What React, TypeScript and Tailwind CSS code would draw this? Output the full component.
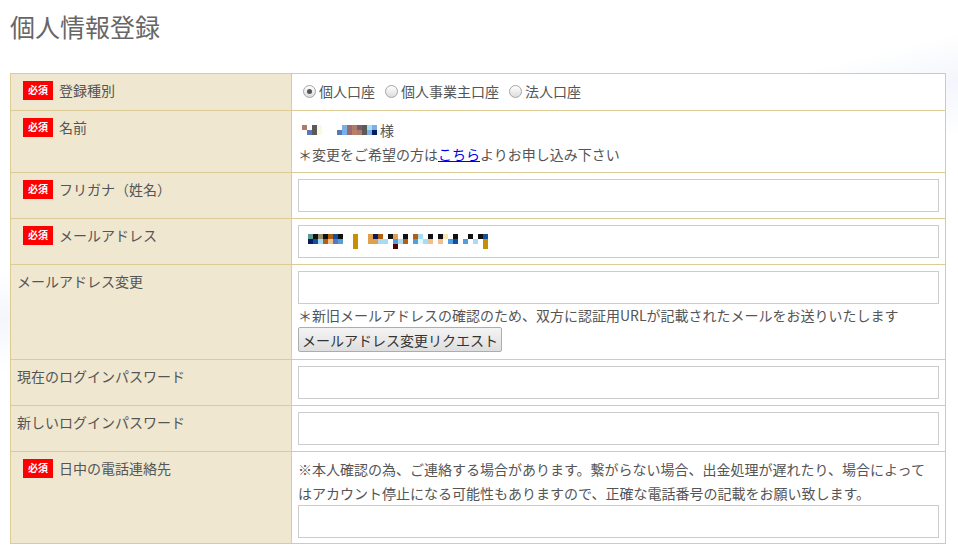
import React from 'react';

const font = { fontFamily: '"Noto Sans CJK JP", "Noto Sans", sans-serif' };

const palette: Record<string, string> = {
    a: '#b07a68', b: '#5a78b8', c: '#5a5a5a', d: '#fdf8e0', e: '#7ab0e8',
    f: '#9a6a70', g: '#b8806a', h: '#7a5a70', i: '#e0fbff', j: '#5a9a90',
    k: '#0a1a5a', l: '#111111', m: '#9a9070', n: '#b06010', o: '#1050a0',
    p: '#c89000', q: '#e0a050', r: '#a8dcf4', s: '#500000', t: '#f0c090',
    u: '#50a0e0', v: '#f8e8b0',
};

// censored text in the picture, drawn as 5px blocks
const Mosaic = ({ rows }: { rows: string[] }) => (
    <span className="inline-flex flex-col align-middle">
        {rows.map((row, ri) => (
            <span key={ri} className="flex">
                {row.split('').map((ch, ci) => (
                    <span
                        key={ci}
                        className="block h-[5px] w-[5px]"
                        style={{ background: ch === '.' ? 'transparent' : palette[ch] }}
                    />
                ))}
            </span>
        ))}
    </span>
);

const Required = () => (
    <span className="ml-[6px] mr-[6px] inline-flex h-[19px] w-[30px] items-center justify-center bg-[#ff0000] text-[10px] font-bold leading-none text-white">
        必須
    </span>
);

const Label = ({ children, required }: { children: React.ReactNode; required?: boolean }) => (
    <td className="w-[281px] border border-[#dccb94] bg-[#efe7d0] pb-[6px] pl-[6px] pt-[4px] align-top text-[14px] leading-[24px] text-[#555]">
        <div className="flex items-center">
            {required && <Required />}
            <span>{children}</span>
        </div>
    </td>
);

const TextInput = ({ children }: { children?: React.ReactNode }) => (
    <div className="flex h-[33px] w-full items-center border border-[#cccccc] bg-white px-[9px]">{children}</div>
);

const Radio = ({ checked, label }: { checked?: boolean; label: string }) => (
    <label className="mr-[10px] inline-flex items-center">
        <span className="mr-[3px] flex h-[13px] w-[13px] items-center justify-center rounded-full border border-[#a6a6a6] bg-[linear-gradient(#ffffff,#dcdcdc)]">
            {checked && <span className="h-[5px] w-[5px] rounded-full bg-[#555]" />}
        </span>
        {label}
    </label>
);

export default function App() {
    return (
        <div
            className="relative min-h-[559px] w-[958px] overflow-hidden bg-white bg-[linear-gradient(166deg,#ffffff_0%,#ffffff_34%,#f3f6fc_40%,#ffffff_47%,#ffffff_100%)] text-[#555]"
            style={font}
        >
            <h1 className="px-[10px] pt-[9px] text-[25px] font-normal leading-[34px] text-[#666]">個人情報登録</h1>

            <table className="ml-[10px] mt-[30px] w-[936px] border-collapse border border-[#dccb94] bg-white">
                <tbody>
                    <tr>
                        <Label required>登録種別</Label>
                        <td className="border border-[#dccb94] px-[11px] pb-[7px] pt-[5px] align-top text-[14px] leading-[24px]">
                            <div className="flex items-center">
                                <Radio checked label="個人口座" />
                                <Radio label="個人事業主口座" />
                                <Radio label="法人口座" />
                            </div>
                        </td>
                    </tr>
                    <tr>
                        <Label required>名前</Label>
                        <td className="border border-[#dccb94] pb-[6px] pl-[6px] pr-[6px] pt-[7px] align-top text-[14px] leading-[24px]">
                            <div className="flex items-center pl-[4px]">
                                <Mosaic rows={['a.cd', '.bcd']} />
                                <span className="w-[15px]" />
                                <Mosaic rows={['.efahcre.', 'befgaceki']} />
                                <span className="-ml-[2px]">様</span>
                            </div>
                            <div>
                                ＊変更をご希望の方は<a className="text-[#0000ee] underline">こちら</a>よりお申し込み下さい
                            </div>
                        </td>
                    </tr>
                    <tr>
                        <Label required>フリガナ（姓名）</Label>
                        <td className="border border-[#dccb94] p-[6px] align-top">
                            <TextInput />
                        </td>
                    </tr>
                    <tr>
                        <Label required>メールアドレス</Label>
                        <td className="border border-[#dccb94] p-[6px] align-top">
                            <TextInput>
                                <Mosaic
                                    rows={[
                                        'jlmlnol..p..qkn.lq.l.nr.l.lv.l..l.lo',
                                        'korntbu..p..qqrr.urn.uirt.t.uo.u.r.p',
                                        '.........p.......s.................p',
                                    ]}
                                />
                            </TextInput>
                        </td>
                    </tr>
                    <tr>
                        <Label>メールアドレス変更</Label>
                        <td className="border border-[#dccb94] px-[6px] pb-[7px] pt-[6px] align-top text-[14px]">
                            <TextInput />
                            <div className="leading-[22px]">
                                ＊新旧メールアドレスの確認のため、双方に認証用URLが記載されたメールをお送りいたします
                            </div>
                            <button className="mt-px h-[25px] rounded-[2px] border border-[#adadad] bg-[linear-gradient(#f4f4f4,#dedede)] px-[3px] text-[14px] font-normal leading-[22px] text-[#333]">
                                メールアドレス変更リクエスト
                            </button>
                        </td>
                    </tr>
                    <tr>
                        <Label>現在のログインパスワード</Label>
                        <td className="border border-[#dccb94] p-[6px] align-top">
                            <TextInput />
                        </td>
                    </tr>
                    <tr>
                        <Label>新しいログインパスワード</Label>
                        <td className="border border-[#dccb94] p-[6px] align-top">
                            <TextInput />
                        </td>
                    </tr>
                    <tr>
                        <Label required>日中の電話連絡先</Label>
                        <td className="border border-[#dccb94] px-[6px] pb-[5px] pt-[5px] align-top text-[14px] leading-[24px]">
                            <div>
                                ※本人確認の為、ご連絡する場合があります。繋がらない場合、出金処理が遅れたり、場合によって
                                <br />
                                はアカウント停止になる可能性もありますので、正確な電話番号の記載をお願い致します。
                            </div>
                            <TextInput />
                        </td>
                    </tr>
                </tbody>
            </table>
        </div>
    );
}
